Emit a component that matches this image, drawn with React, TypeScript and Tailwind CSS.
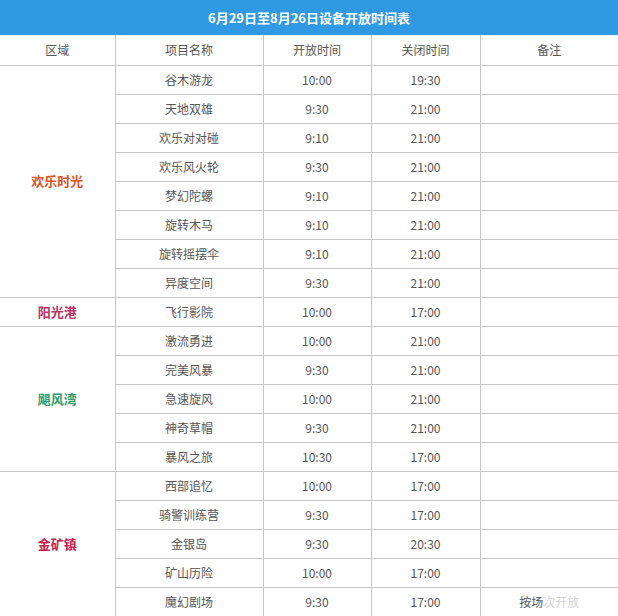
// Equipment opening hours table, 6/29 - 8/26
type Ride = { name: string; open: string; close: string; note?: string };
type Zone = { zone: string; color: string; rides: Ride[] };

const zones: Zone[] = [
  {
    zone: '欢乐时光',
    color: 'text-[#d9531e]',
    rides: [
      { name: '谷木游龙', open: '10:00', close: '19:30' },
      { name: '天地双雄', open: '9:30', close: '21:00' },
      { name: '欢乐对对碰', open: '9:10', close: '21:00' },
      { name: '欢乐风火轮', open: '9:30', close: '21:00' },
      { name: '梦幻陀螺', open: '9:10', close: '21:00' },
      { name: '旋转木马', open: '9:10', close: '21:00' },
      { name: '旋转摇摆伞', open: '9:10', close: '21:00' },
      { name: '异度空间', open: '9:30', close: '21:00' },
    ],
  },
  {
    zone: '阳光港',
    color: 'text-[#b93262]',
    rides: [{ name: '飞行影院', open: '10:00', close: '17:00' }],
  },
  {
    zone: '飓风湾',
    color: 'text-[#2a9d6e]',
    rides: [
      { name: '激流勇进', open: '10:00', close: '21:00' },
      { name: '完美风暴', open: '9:30', close: '21:00' },
      { name: '急速旋风', open: '10:00', close: '21:00' },
      { name: '神奇草帽', open: '9:30', close: '21:00' },
      { name: '暴风之旅', open: '10:30', close: '17:00' },
    ],
  },
  {
    zone: '金矿镇',
    color: 'text-[#c4204d]',
    rides: [
      { name: '西部追忆', open: '10:00', close: '17:00' },
      { name: '骑警训练营', open: '9:30', close: '17:00' },
      { name: '金银岛', open: '9:30', close: '20:30' },
      { name: '矿山历险', open: '10:00', close: '17:00' },
      { name: '魔幻剧场', open: '9:30', close: '17:00', note: 'last' },
    ],
  },
];

const cell = 'border border-[#c6c6c6] text-center align-middle p-0';

export default function App() {
  return (
    <div className="w-[618px] h-[616px] overflow-hidden bg-white text-[12px] text-[#555] [font-family:'Noto_Sans_CJK_SC','Liberation_Sans',sans-serif]">
      <div className="h-[35px] bg-[#2f9ae3] flex items-center justify-center text-white font-bold text-[13px]">
        6月29日至8月26日设备开放时间表
      </div>
      <table className="w-full table-fixed border-collapse border-hidden">
        <colgroup>
          <col className="w-[115px]" />
          <col className="w-[148px]" />
          <col className="w-[108px]" />
          <col className="w-[109px]" />
          <col className="w-[138px]" />
        </colgroup>
        <thead>
          <tr className="h-[30px]">
            <th className={`${cell} font-normal`}>区域</th>
            <th className={`${cell} font-normal`}>项目名称</th>
            <th className={`${cell} font-normal`}>开放时间</th>
            <th className={`${cell} font-normal`}>关闭时间</th>
            <th className={`${cell} font-normal`}>备注</th>
          </tr>
        </thead>
        <tbody>
          {zones.map((z) =>
            z.rides.map((r, i) => (
              <tr key={z.zone + r.name} className="h-[29px]">
                {i === 0 && (
                  <td rowSpan={z.rides.length} className={`${cell} ${z.color} font-bold text-[13px]`}>
                    {z.zone}
                  </td>
                )}
                <td className={cell}>{r.name}</td>
                <td className={cell}>{r.open}</td>
                <td className={cell}>{r.close}</td>
                <td className={cell}>
                  {r.note && (
                    <span>
                      按场<span className="text-[#d4d4d4]">次开放</span>
                    </span>
                  )}
                </td>
              </tr>
            ))
          )}
        </tbody>
      </table>
    </div>
  );
}
